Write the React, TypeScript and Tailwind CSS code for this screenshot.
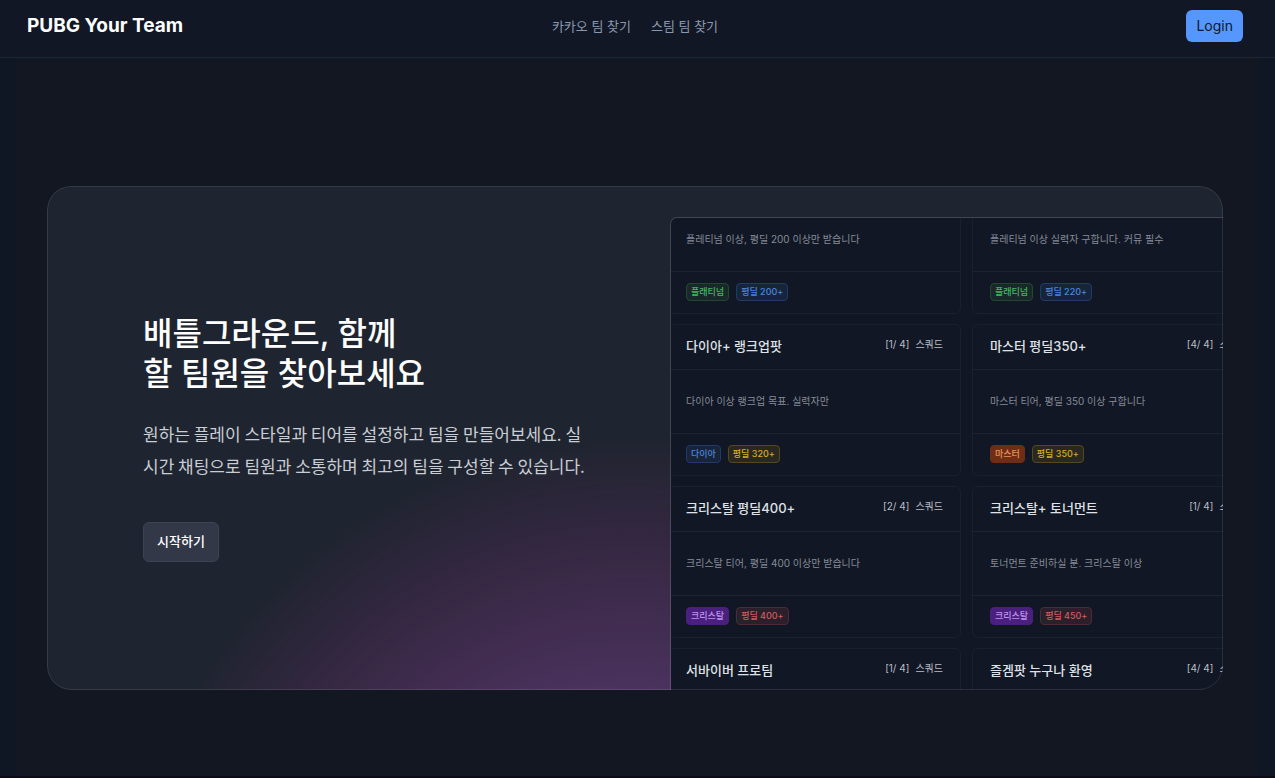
type Tone = 'green' | 'blue' | 'yellow' | 'orange' | 'purple' | 'red';

interface Party {
  id: number;
  heading?: { title: string; count: string };
  body?: { description: string; badges: [string, Tone][] };
}

const tones: Record<Tone, string> = {
  green: 'border-[#22472f] bg-[#19292a] text-[#49b565]',
  blue: 'border-[#213a66] bg-[#17243c] text-[#4b86dd]',
  yellow: 'border-[#57481b] bg-[#2a2822] text-[#dcaa22]',
  orange: 'border-[#702d15] bg-[#702d15] text-[#e29558]',
  purple: 'border-[#4a1f7d] bg-[#4a1f7d] text-[#bd94ee]',
  red: 'border-[#502a33] bg-[#2a1f2a] text-[#cf5c5c]',
};

const parties: Party[] = [
  { id: 1, body: { description: '플레티넘 이상, 평딜 200 이상만 받습니다', badges: [['플래티넘', 'green'], ['평딜 200+', 'blue']] } },
  { id: 2, body: { description: '플레티넘 이상 실력자 구합니다. 커뮤 필수', badges: [['플래티넘', 'green'], ['평딜 220+', 'blue']] } },
  {
    id: 3,
    heading: { title: '다이아+ 랭크업팟', count: '[1/ 4]' },
    body: { description: '다이아 이상 랭크업 목표. 실력자만', badges: [['다이아', 'blue'], ['평딜 320+', 'yellow']] },
  },
  {
    id: 4,
    heading: { title: '마스터 평딜350+', count: '[4/ 4]' },
    body: { description: '마스터 티어, 평딜 350 이상 구합니다', badges: [['마스터', 'orange'], ['평딜 350+', 'yellow']] },
  },
  {
    id: 5,
    heading: { title: '크리스탈 평딜400+', count: '[2/ 4]' },
    body: { description: '크리스탈 티어, 평딜 400 이상만 받습니다', badges: [['크리스탈', 'purple'], ['평딜 400+', 'red']] },
  },
  {
    id: 6,
    heading: { title: '크리스탈+ 토너먼트', count: '[1/ 4]' },
    body: { description: '토너먼트 준비하실 분. 크리스탈 이상', badges: [['크리스탈', 'purple'], ['평딜 450+', 'red']] },
  },
  { id: 7, heading: { title: '서바이버 프로팀', count: '[1/ 4]' } },
  { id: 8, heading: { title: '즐겜팟 누구나 환영', count: '[4/ 4]' } },
];

function Badge({ label, tone }: { label: string; tone: Tone }) {
  return (
    <span className={`flex h-[18px] items-center rounded border px-1 text-[9px] font-medium ${tones[tone]}`}>
      {label}
    </span>
  );
}

function PartyCard({ heading, body }: Party) {
  return (
    <article className="rounded-md border border-[#1a212e] whitespace-nowrap">
      {heading && (
        <header className="flex h-[45px] items-center justify-between border-b border-[#1c2330] px-[17px]">
          <h3 className="text-[13px] font-medium text-[#dfe2e8]">{heading.title}</h3>
          <p className="flex gap-[6px] pb-[6px] text-[10px] text-[#b9bec6]">
            <span>{heading.count}</span>
            <span>스쿼드</span>
          </p>
        </header>
      )}
      {body && (
        <>
          <p className="flex h-16 items-center border-b border-[#1c2330] px-[17px] text-[10px] text-[#858b97]">
            {body.description}
          </p>
          <footer className="flex h-[41px] items-center gap-[7px] px-[17px] pb-px">
            {body.badges.map(([label, tone]) => (
              <Badge key={label} label={label} tone={tone} />
            ))}
          </footer>
        </>
      )}
    </article>
  );
}

function Glow() {
  return (
    <svg
      viewBox="0 0 1024 1024"
      aria-hidden="true"
      className="absolute top-1/2 left-1/2 size-[1024px] max-w-none -translate-x-1/2 [mask-image:radial-gradient(closest-side,white,transparent)]"
    >
      <circle cx="512" cy="512" r="512" fill="url(#glow)" fillOpacity="0.6" />
      <defs>
        <radialGradient id="glow">
          <stop stopColor="#7775D6" />
          <stop offset="1" stopColor="#E935C1" />
        </radialGradient>
      </defs>
    </svg>
  );
}

export default function App() {
  return (
    <div className="flex min-h-screen flex-col border-b-2 border-[#0b0c17] bg-[#101724] font-[Inter,'Noto_Sans_CJK_KR',sans-serif]">
      <header className="grid grid-cols-[1fr_auto_1fr] items-center border-b border-[#1e2533] bg-[#111724] pt-[10px] pr-8 pb-[15px] pl-[27px]">
        <a href="#home" className="justify-self-start text-[19px] leading-8 font-bold text-white">
          PUBG Your Team
        </a>
        <nav className="flex gap-5 text-[13px] leading-8 text-[#8b97ae]">
          <a href="#kakao">카카오 팀 찾기</a>
          <a href="#steam">스팀 팀 찾기</a>
        </nav>
        <button type="button" className="h-8 justify-self-end rounded-md bg-[#5597ff] px-[10px] text-sm text-[#111724]">
          Login
        </button>
      </header>

      <main className="mx-4 flex-1 bg-[#131721] pt-32 pr-9 pb-20 pl-[31px]">
        <section className="relative isolate flex gap-20 overflow-hidden rounded-3xl bg-[#1f2530] pl-24">
          <Glow />
          <div className="relative w-[448px] shrink-0 py-32">
            <h1 className="text-[32px] leading-10 font-medium text-white">
              배틀그라운드, 함께
              <br />
              할 팀원을 찾아보세요
            </h1>
            <p className="mt-6 font-['Noto_Sans_CJK_KR',sans-serif] text-[17px] leading-8 text-[#c9cdd4]">
              원하는 플레이 스타일과 티어를 설정하고 팀을 만들어보세요. 실시간 채팅으로 팀원과 소통하며 최고의 팀을 구성할 수 있습니다.
            </p>
            <button type="button" className="mt-10 h-10 rounded-md border border-[#3d4353] bg-[#323848] px-[13px] text-[13px] font-medium text-white">
              시작하기
            </button>
          </div>
          <div className="relative mt-8 min-w-0 flex-1 overflow-hidden rounded-tl-md bg-[#111724] ring-1 ring-white/15 contain-size">
            <div className="-mt-[11px] -ml-[3px] grid grid-cols-[293px_293px] gap-x-[11px] gap-y-[10px]">
              {parties.map((party) => (
                <PartyCard key={party.id} {...party} />
              ))}
            </div>
          </div>
          <div className="pointer-events-none absolute inset-0 rounded-3xl border border-white/10" />
        </section>
      </main>
    </div>
  );
}
